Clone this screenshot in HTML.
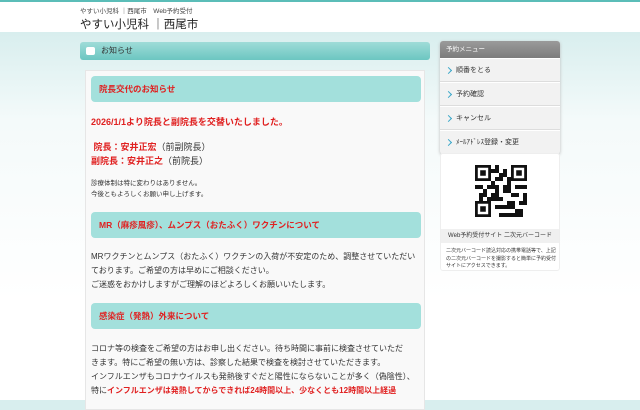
<!DOCTYPE html>
<html><head><meta charset="utf-8"><style>
*{margin:0;padding:0;box-sizing:border-box}
body{width:640px;height:400px;overflow:hidden;font-family:"Liberation Sans","Noto Sans CJK JP",sans-serif;color:#333;background:linear-gradient(180deg,#d8eeee 32px,#f4fafa 120px,#fff 300px);position:relative}
.top{position:absolute;left:0;top:0;width:640px;height:32px;background:#fff;border-top:2px solid #5bbdb8}
.abs{position:absolute}
.hb{left:80px;top:42px;width:350px;height:18px;border-radius:3px;background:linear-gradient(#9fdcd8,#6cc6c1);font-size:8px;line-height:18px;padding-left:21px;color:#333}
.hb i{position:absolute;left:6px;top:5px;width:9px;height:8px;background:#fff;border-radius:2px}
.box{left:85px;top:70px;width:340px;height:340px;background:#f9f9f9;border:1px solid #e6e6e6}
.sh{position:absolute;left:5px;width:330px;height:26px;background:#a3e0dc;border-radius:4px;color:#e02020;font-size:8.5px;line-height:26px;padding-left:8px;font-weight:bold}
.t{position:absolute;left:5px;font-size:8px;line-height:14px;white-space:nowrap}
.r{color:#e02020;font-weight:bold}
.side{left:440px;top:41px;width:120px;height:113px;border-radius:3px;background:#f2f2f2;box-shadow:0 1px 3px #bbb}
.mh{height:17px;background:linear-gradient(#9a9a9a,#7c7c7c);color:#fff;font-size:6.5px;line-height:17px;padding-left:6px;border-radius:3px 3px 0 0}
.mi{height:24px;border-top:1px solid #fff;border-bottom:1px solid #ddd;font-size:7px;line-height:23px;padding-left:16px;position:relative;color:#333}
.mi:before{content:"";position:absolute;left:6px;top:9px;width:4px;height:4px;border-right:1.3px solid #3aa7c9;border-top:1.3px solid #3aa7c9;transform:rotate(45deg)}
.qr{left:440px;top:153px;width:120px;height:118px;background:#fff;border:1px solid #eee;border-radius:3px}
</style></head><body>
<div class="top"><div class="abs" style="left:80px;top:3px;font-size:6.5px;color:#444">やすい小児科 ｜西尾市　Web予約受付</div>
<div class="abs" style="left:80px;top:14px;font-size:11.5px;color:#222">やすい小児科 ｜西尾市</div></div>
<div class="abs hb"><i></i>お知らせ</div>
<div class="abs box">
<div class="sh" style="top:5px">院長交代のお知らせ</div>
<div class="t r" style="top:44px;font-size:9px">2026/1/1より院長と副院長を交替いたしました。</div>
<div class="t" style="top:69px;font-size:9px"><span class="r">&nbsp;院長：安井正宏</span>（前副院長）</div>
<div class="t" style="top:83px;font-size:9px"><span class="r">副院長：安井正之</span>（前院長）</div>
<div class="t" style="top:107px;font-size:6.5px;line-height:11px">診療体制は特に変わりはありません。<br>今後ともよろしくお願い申し上げます。</div>
<div class="sh" style="top:141px">MR（麻疹風疹）、ムンプス（おたふく）ワクチンについて</div>
<div class="t" style="top:179px">MRワクチンとムンプス（おたふく）ワクチンの入荷が不安定のため、調整させていただい<br>ております。ご希望の方は早めにご相談ください。<br>ご迷惑をおかけしますがご理解のほどよろしくお願いいたします。</div>
<div class="sh" style="top:232px">感染症（発熱）外来について</div>
<div class="t" style="top:271px">コロナ等の検査をご希望の方はお申し出ください。待ち時間に事前に検査させていただ<br>きます。特にご希望の無い方は、診察した結果で検査を検討させていただきます。<br>インフルエンザもコロナウイルスも発熱後すぐだと陽性にならないことが多く（偽陰性）、<br>特に<span class="r">インフルエンザは発熱してからできれば24時間以上、少なくとも12時間以上経過</span></div>
</div>
<div class="abs side"><div class="mh">予約メニュー</div>
<div class="mi">順番をとる</div><div class="mi">予約確認</div><div class="mi">キャンセル</div><div class="mi" style="border-bottom:none">ﾒｰﾙｱﾄﾞﾚｽ登録・変更</div></div>
<div class="abs qr">
<svg class="abs" style="left:34px;top:11px" width="52" height="52" viewBox="0 0 13 13">
<rect width="13" height="13" fill="#fff"/>
<g fill="#111"><path d="M0 0h4v4H0zM9 0h4v4H9zM0 9h4v4H0z"/></g>
<g fill="#fff"><path d="M.7.7h2.6v2.6H.7zM9.7.7h2.6v2.6H9.7zM.7 9.7h2.6v2.6H.7z"/></g>
<g fill="#111"><path d="M1.3 1.3h1.4v1.4H1.3zM10.3 1.3h1.4v1.4h-1.4zM1.3 10.3h1.4v1.4H1.3zM5 0h1v2H5zM7 1h1v2H7zM5 3h2v1H5zM0 5h2v1H0zM3 5h3v1H3zM7 5h2v2H7zM10 5h3v1h-3zM1 7h2v1H1zM4 7h2v2H4zM9 7h2v1H9zM12 7h1v3h-1zM5 10h2v1H5zM8 9h2v2H8zM6 12h3v1H6zM10 11h2v2h-2zM5 5h1v2H5zM2 6h1v1H2zM4 1h1v1H4zM6 2h1v1H6zM8 3h1v1H8zM4 4h1v1H4zM1 8h1v1H1zM3 8h1v1H3zM6 8h1v1H6zM7 10h1v1H7zM9 12h1v1H9zM11 9h1v1h-1zM8 4h1v1H8z"/></g></svg>
<div class="abs" style="left:0;top:75px;width:118px;height:14px;background:#f0f0f0;font-size:6px;line-height:14px;text-align:center">Web予約受付サイト 二次元バーコード</div>
<div class="abs" style="left:5px;top:94px;width:110px;font-size:5px;line-height:7.5px">二次元バーコード読込対応の携帯電話等で、上記の二次元バーコードを撮影すると簡単に予約受付サイトにアクセスできます。</div>
</div>
</body></html>
